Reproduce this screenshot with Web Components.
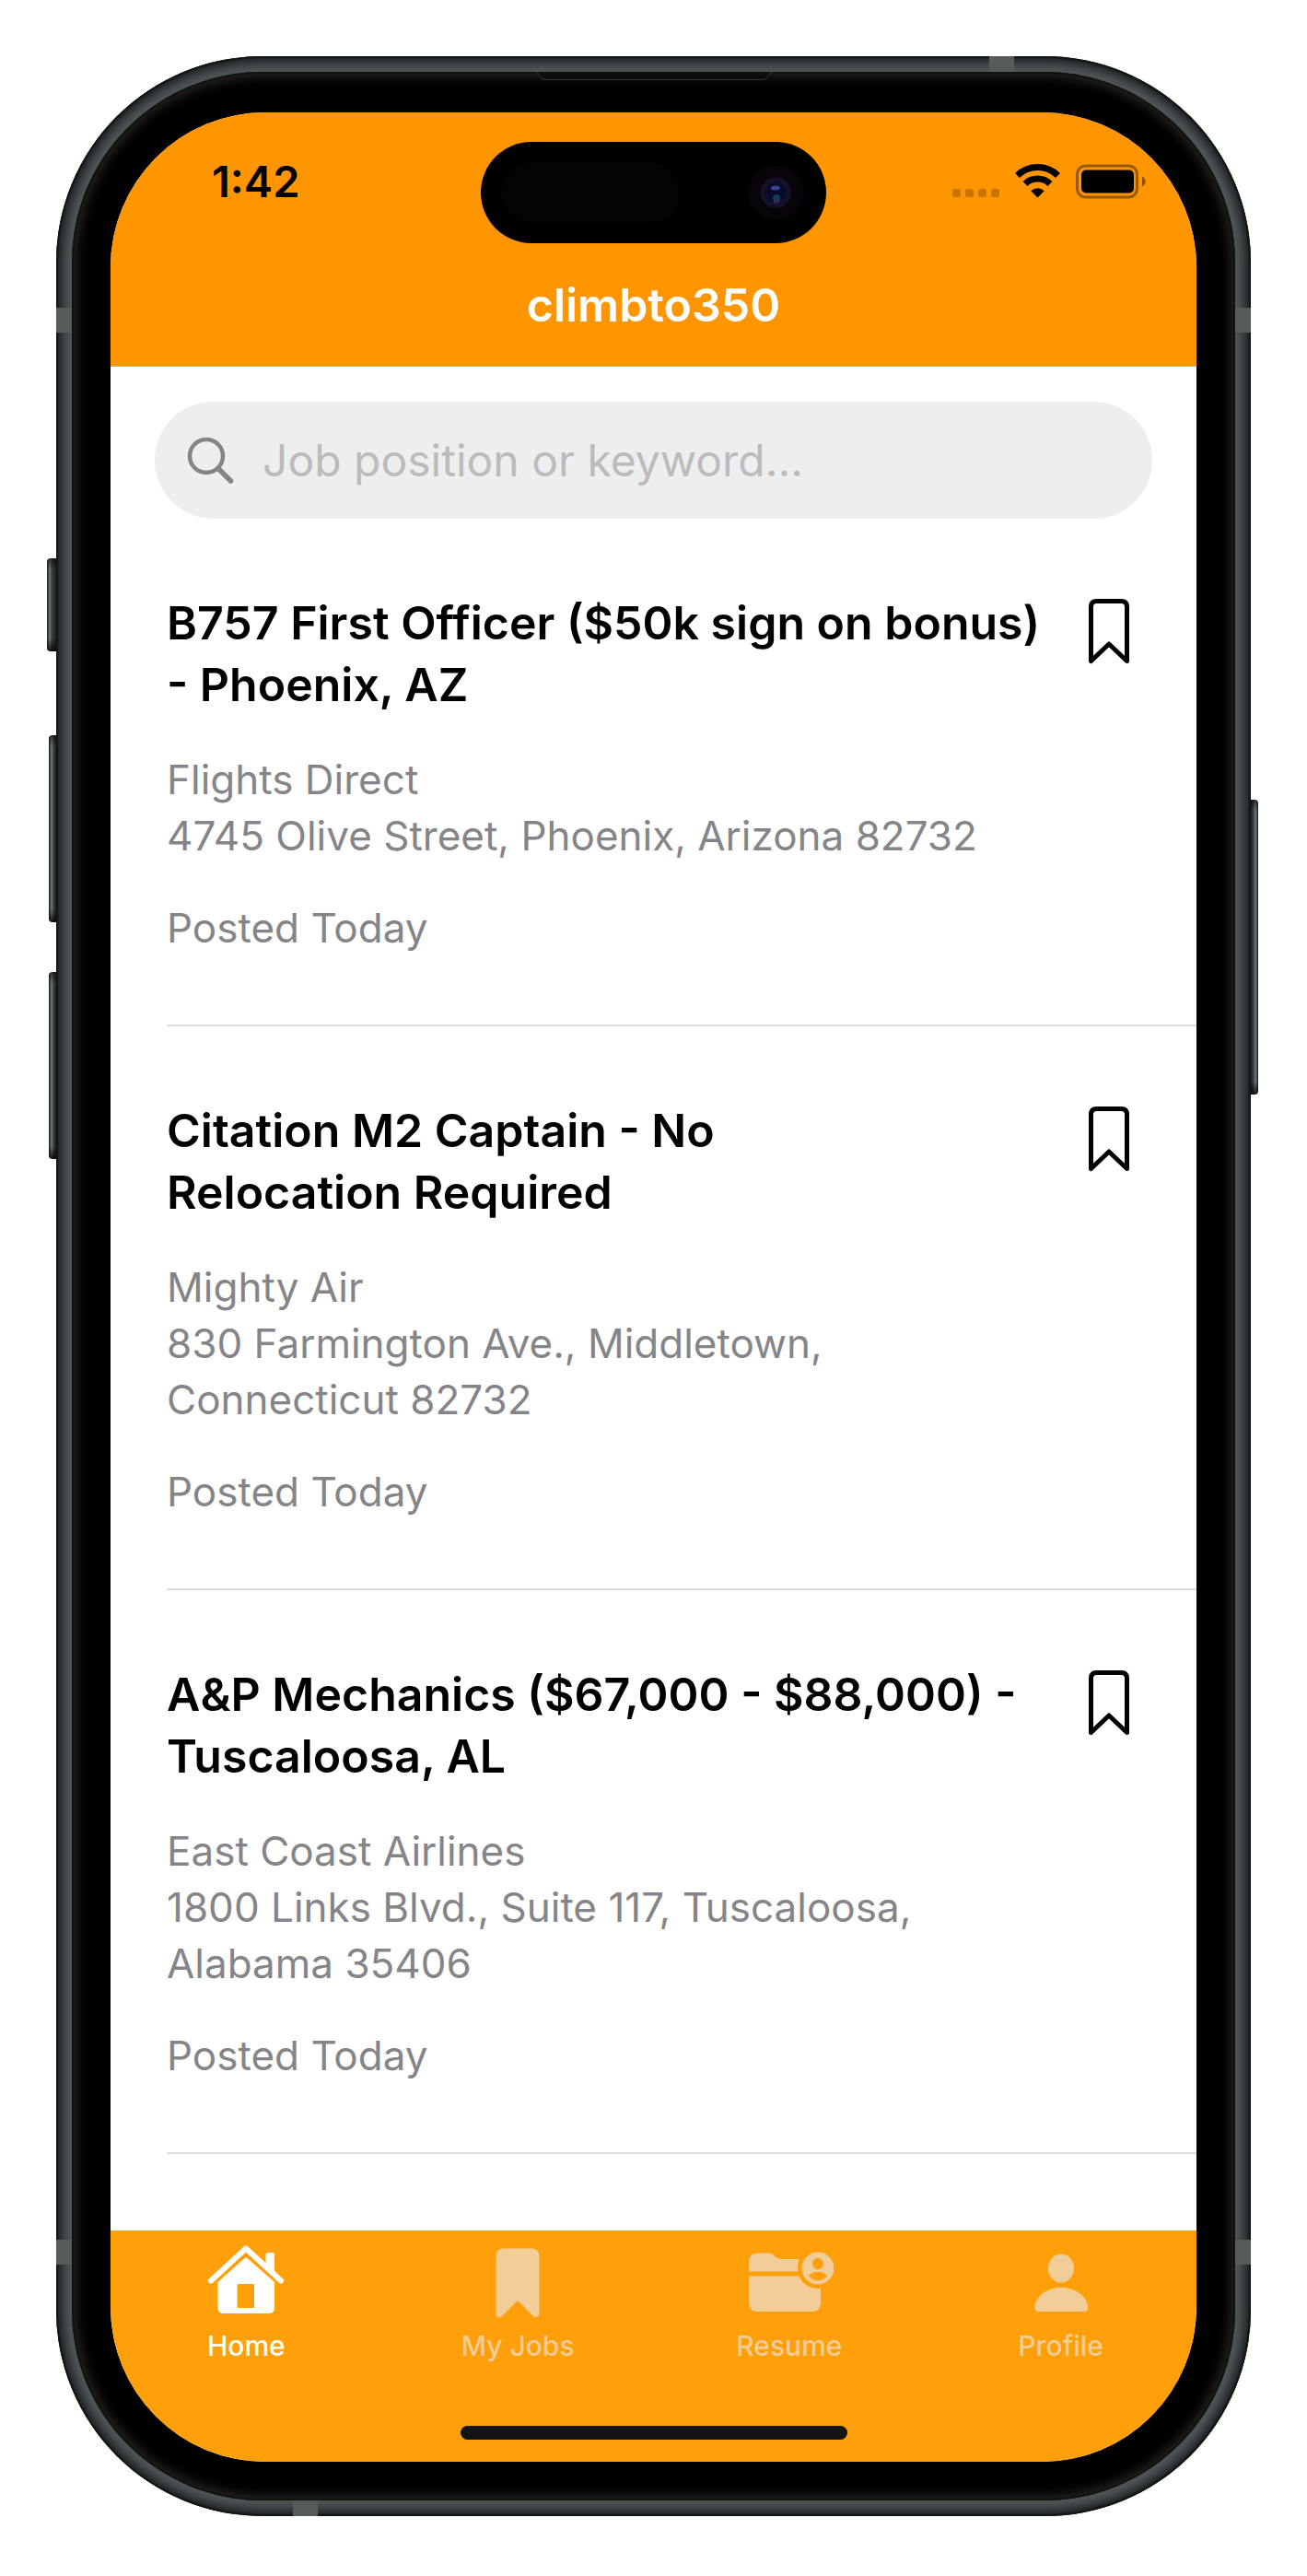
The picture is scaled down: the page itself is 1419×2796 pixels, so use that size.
<!DOCTYPE html>
<html lang="en">
<head>
<meta charset="utf-8">
<meta name="viewport" content="width=device-width, initial-scale=1">
<title>climbto350</title>
<style>
  body { margin: 0; background: #fff; font-family: Inter, "Liberation Sans", sans-serif; color: #000; }
</style>
</head>
<body>
<phone-frame>
  <app-header>climbto350</app-header>
  <main>
    <job-search></job-search>
    <job-card>
      <span slot="title">B757 First Officer ($50k sign on bonus)<br>- Phoenix, AZ</span>
      <span slot="company">Flights Direct</span>
      <span slot="address">4745 Olive Street, Phoenix, Arizona 82732</span>
      <span slot="posted">Posted Today</span>
    </job-card>
    <job-card>
      <span slot="title">Citation M2 Captain - No<br>Relocation Required</span>
      <span slot="company">Mighty Air</span>
      <span slot="address">830 Farmington Ave., Middletown,<br>Connecticut 82732</span>
      <span slot="posted">Posted Today</span>
    </job-card>
    <job-card>
      <span slot="title">A&amp;P Mechanics ($67,000 - $88,000) -<br>Tuscaloosa, AL</span>
      <span slot="company">East Coast Airlines</span>
      <span slot="address">1800 Links Blvd., Suite 117, Tuscaloosa,<br>Alabama 35406</span>
      <span slot="posted">Posted Today</span>
    </job-card>
  </main>
  <tab-bar slot="footer">
    <tab-item current>
      <svg slot="icon" width="84" height="80" viewBox="0 0 84 80" fill="currentColor" aria-hidden="true">
        <path d="M4 40.500 42 5.500 80 40.500" fill="none" stroke="currentColor" stroke-width="6" stroke-linecap="round" stroke-linejoin="round"/>
        <path d="M63.500 27V12.500a2.500 2.500 0 0 1 2.500-2.500h4.500a2.500 2.500 0 0 1 2.500 2.500V34z"/>
        <path fill-rule="evenodd" d="M40 16.500q2-2 4 0L73 42V70q0 6-6.500 6H18q-6.500 0-6.500-6V42zM34 44q-1.500 0-1.500 1.500v23q0 1.500 1.500 1.500h15.500q1.500 0 1.500-1.500v-23q0-1.500-1.500-1.500z"/>
      </svg>Home
    </tab-item>
    <tab-item>
      <svg slot="icon" width="84" height="80" viewBox="0 0 84 80" fill="currentColor" aria-hidden="true">
        <path d="M18.500 14q0-8.500 9-8.500h29q9 0 9 8.500V76q0 4-3.500 4-2 0-3.500-1.600L42 62 25.500 78.400Q24 80 22 80q-3.500 0-3.500-4z"/>
      </svg>My Jobs
    </tab-item>
    <tab-item>
      <svg slot="icon" width="96" height="80" viewBox="0 0 96 80" fill="currentColor" aria-hidden="true">
        <path d="M4 30.500V20.500Q4 10.500 13.500 10.500H24q4 0 6.500 2l3 2.600q2.500 1.900 6 1.900H59A22 22 0 0 0 57.500 30.500z"/>
        <path d="M4 35.500H58.500A22 22 0 0 0 82 48.800V63q0 11-9.500 11H13.500Q4 74 4 63z"/>
        <path fill-rule="evenodd" d="M79 9.500a17.500 17.500 0 1 1 0 35a17.500 17.500 0 1 1 0-35zM79 15.800c-3.300 0-5.800 2.800-5.800 6.200s2.500 6.500 5.800 6.500 5.800-3.100 5.800-6.500-2.500-6.200-5.800-6.200zM79 31c-5 0-9 2-10 4.300q4 5 10 5t10-5c-1-2.300-5-4.300-10-4.300z"/>
      </svg>Resume
    </tab-item>
    <tab-item>
      <svg slot="icon" width="84" height="80" viewBox="0 0 84 80" fill="currentColor" aria-hidden="true">
        <ellipse cx="42" cy="27" rx="14" ry="15.500"/>
        <path d="M42 48C58 48 71 58 71 69.500Q71 74 67 74H17.500Q13.500 74 13.500 69.500C13.500 58 26 48 42 48z"/>
      </svg>Profile
    </tab-item>
  </tab-bar>
</phone-frame>

<script>
const define = (name, html) => {
  const template = document.createElement('template');
  template.innerHTML = html;
  customElements.define(name, class extends HTMLElement {
    constructor() {
      super();
      this.attachShadow({ mode: 'open' }).append(template.content.cloneNode(true));
    }
  });
};

// Device shell: metal band, side buttons, bezel, then the rounded screen.
define('phone-frame', `
  <style>
    :host { display: block; padding: 61px; }
    .band { position: relative; padding: 17px; border-radius: 224px; background: #505658;
      box-shadow: inset 0 0 2px 2px #101314, inset 0 0 10px 8px #222628; }
    .bezel { position: relative; padding: 42px; padding-top: 44px; border-radius: 207px; background: #000;
      box-shadow: inset 0 0 0 2px #111313, inset 0 0 14px 4px #2c2c2c; }
    .screen { display: flex; flex-direction: column; overflow: hidden; border-radius: 168px; background: #fff; }
    .content { flex: 1; padding-bottom: 83px; }
    .key { position: absolute; width: 8px; left: -8px; border-radius: 4px 0 0 4px;
      background: linear-gradient(#0008, #0000 12px calc(100% - 14px), #000c), linear-gradient(90deg, #17191a, #74797b 3px, #3b4042 5px, #1c2021); }
    .mute { top: 545px; height: 101px; width: 10px; left: -10px; }
    .up { top: 737px; height: 203px; }
    .down { top: 994px; height: 203px; }
    .power { top: 807px; height: 320px; left: auto; right: -8px; border-radius: 0 4px 4px 0;
      background: linear-gradient(#0008, #0000 12px calc(100% - 14px), #000c), linear-gradient(270deg, #17191a, #74797b 3px, #3b4042 5px, #1c2021); }
    .line { position: absolute; background: #565b5c; width: 17px; height: 27px; }
    .l { left: 0; } .r { right: 0; } .high { top: 273px; } .low { bottom: 273px; }
    .across { width: 27px; height: 17px; }
    .top { top: 0; right: 257px; } .bottom { bottom: 0; left: 257px; }
    .speaker { position: absolute; top: 0; left: 50%; margin-left: -129px; }
  </style>
  <div class="band">
    <i class="key mute"></i><i class="key up"></i><i class="key down"></i><i class="key power"></i>
    <i class="line l high"></i><i class="line r high"></i><i class="line l low"></i><i class="line r low"></i>
    <i class="line across top"></i><i class="line across bottom"></i>
    <div class="bezel">
      <svg class="speaker" width="258" height="10" viewBox="0 0 258 10" aria-hidden="true">
        <path d="M0 0q3 0 4 3 2 5.500 6 5.500H248q4 0 6-5.500 1-3 4-3" fill="#0d0e0e" stroke="#333" stroke-width="1"/>
      </svg>
      <div class="screen"><div class="content"><slot></slot></div><slot name="footer"></slot></div>
    </div>
  </div>`);

// Status bar and navigation title.
define('app-header', `
  <style>
    :host { display: block; position: relative; background: #ff9500; border-bottom: 1px solid #b2b2b2; }
    .status { display: flex; justify-content: space-between; align-items: center; height: 150px; padding: 0 54px 0 110px; }
    .time { font-size: 47px; font-weight: 600; line-height: 54px; }
    .icons { display: flex; align-items: center; }
    .island { position: absolute; top: 32px; left: 50%; margin-left: -188px; width: 375px; height: 110px; border-radius: 55px; background: #000; }
    .island svg { display: block; }
    h1 { margin: 0; padding: 28px 0 35px; font-size: 50px; line-height: 62px; font-weight: 600; color: #fff; text-align: center; }
  </style>
  <div class="status">
    <span class="time">1:42</span>
    <svg class="icons" width="211" height="40" viewBox="0 0 211 40" aria-hidden="true">
      <g fill="#000" fill-opacity=".22">
        <rect x="0" y="28" width="9" height="9" rx="2.500"/><rect x="14" y="28" width="9" height="9" rx="2.500"/>
        <rect x="28" y="28" width="9" height="9" rx="2.500"/><rect x="42" y="28" width="9" height="9" rx="2.500"/>
      </g>
      <g fill="none" stroke="#000" stroke-width="7">
        <path d="M70.500 13.500a31.500 31.500 0 0 1 44 0"/>
        <path d="M79 22.500a19.500 19.500 0 0 1 27 0"/>
      </g>
      <path d="M92.500 37.500 85.300 30.300a10.300 10.300 0 0 1 14.400 0z"/>
      <rect x="135.500" y="3" width="65" height="34" rx="9" fill="none" stroke="#000" stroke-opacity=".4" stroke-width="3"/>
      <rect x="140" y="7.500" width="57" height="25" rx="5"/>
      <path d="M206 14.500a6 6 0 0 1 0 11z" fill-opacity=".45"/>
    </svg>
  </div>
  <h1><slot></slot></h1>
  <div class="island">
    <svg width="375" height="110" viewBox="0 0 375 110" aria-hidden="true">
      <defs><radialGradient id="lens"><stop offset="0" stop-color="#0a0b2c"/><stop offset=".7" stop-color="#07082c"/><stop offset="1" stop-color="#10112a"/></radialGradient></defs>
      <rect x="22" y="22" width="194" height="66" rx="33" fill="#040404"/>
      <circle cx="320" cy="55" r="30" fill="#08040a"/>
      <circle cx="320" cy="55" r="16.500" fill="#12132a"/>
      <circle cx="320" cy="55" r="12" fill="url(#lens)"/>
      <ellipse cx="320" cy="50" rx="5" ry="2.500" fill="#3c4390"/>
      <circle cx="321" cy="61" r="4" fill="#0d3f4d"/>
      <ellipse cx="321" cy="65" rx="3.500" ry="1.500" fill="#40205c"/>
    </svg>
  </div>`);

define('job-search', `
  <style>
    :host { display: block; padding: 38px 48px 0; }
    label { display: flex; align-items: center; gap: 30px; height: 127px; padding: 0 35px; border-radius: 64px; background: #eee; }
    svg { flex: none; }
    input { flex: 1; min-width: 0; border: 0; padding: 0; background: none; outline: 0; font: inherit; font-size: 48px; line-height: 64px; height: 64px; color: #000; }
    input::placeholder { color: #bbbbbd; opacity: 1; }
  </style>
  <label>
    <svg width="52" height="52" viewBox="0 0 52 52" fill="none" stroke="#858589" stroke-width="4.500" stroke-linecap="round" aria-hidden="true">
      <circle cx="21" cy="21" r="18"/><path d="M34 34.500 47.500 48" stroke-width="5.500"/>
    </svg>
    <input type="search" aria-label="Search jobs" placeholder="Job position or keyword...">
  </label>`);

define('job-card', `
  <style>
    :host { display: block; margin-left: 61px; padding: 80px 68px 74px 0; border-bottom: 2px solid #dcdcde; }
    header { display: flex; align-items: flex-start; justify-content: space-between; }
    h2 { margin: 0; font-size: 50px; line-height: 67px; font-weight: 600; white-space: nowrap; }
    p { margin: 0; font-size: 44px; line-height: 61px; color: #858589; }
    .about, .posted { margin-top: 39px; }
    button { flex: none; margin: 2px 0 0; padding: 4px; border: 0; background: none; color: inherit; cursor: pointer; }
    svg { display: block; }
  </style>
  <header>
    <h2><slot name="title"></slot></h2>
    <button type="button" aria-label="Save job" aria-pressed="false">
      <svg width="46" height="72" viewBox="0 0 46 72" fill="none" stroke="currentColor" stroke-width="5" stroke-linejoin="round" aria-hidden="true">
        <path d="M3.500 68.500V9.500q0-6 6-6h27q6 0 6 6V68.500L23 50z"/>
      </svg>
    </button>
  </header>
  <div class="about"><p><slot name="company"></slot></p><p><slot name="address"></slot></p></div>
  <p class="posted"><slot name="posted"></slot></p>`);

define('tab-bar', `
  <style>
    :host { display: block; background: #ff9f0a; padding-bottom: 24px; }
    nav { display: flex; padding: 14px 0 69px; }
    .indicator { width: 420px; height: 15px; margin: 0 auto; border-radius: 8px; background: #141414; }
  </style>
  <nav aria-label="Main"><slot></slot></nav>
  <div class="indicator"></div>`);

define('tab-item', `
  <style>
    :host { flex: 1; color: #f3cd98; }
    :host([current]) { color: #fff; }
    a { display: flex; flex-direction: column; align-items: center; gap: 13px; color: inherit; text-decoration: none; font-size: 30px; line-height: 36px; font-weight: 500; }
  </style>
  <a href="#"><slot name="icon"></slot><span><slot></slot></span></a>`);
</script>
</body>
</html>
